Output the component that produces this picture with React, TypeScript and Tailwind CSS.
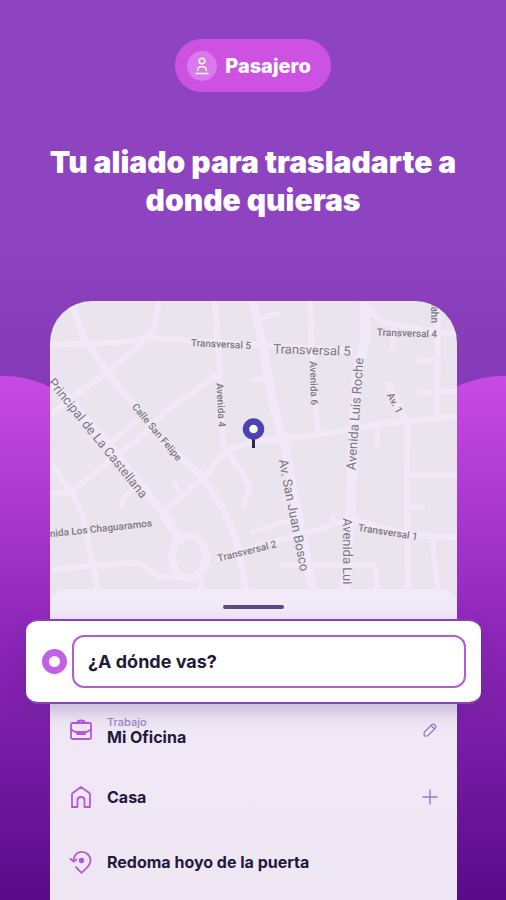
import React from "react";

const roads: { d: string; w: number }[] = [
  { d: "M22 5L35 39L57 71L78 97L112 139L153 177Q174 205 185 236L197 290", w: 7 },
  { d: "M109 0L105 24Q100 35 90 44L57 71L23 96L0 114", w: 6 },
  { d: "M0 44L70 41L105 37L203 44L303 50", w: 6 },
  { d: "M165 0L170 72L173 146", w: 6 },
  { d: "M170 72L117 109L87 139L23 189", w: 6 },
  { d: "M87 119L60 142", w: 5 },
  { d: "M0 162L22 192L33 216L48 290", w: 6 },
  { d: "M0 192L22 192", w: 5 },
  { d: "M0 269L47 264L87 262L110 276L150 277L152 290", w: 6 },
  { d: "M0 78L60 146L113 212L128 236", w: 9 },
  { d: "M113 211L153 177L177 149L203 141L280 132L333 122L407 116", w: 6 },
  { d: "M177 149L200 186L193 206", w: 6 },
  { d: "M203 0L213 46L223 102L235 146L263 290", w: 9 },
  { d: "M260 0L262 49L268 132", w: 6 },
  { d: "M315 0L315 39L307 72L303 146L300 219L295 290", w: 10 },
  { d: "M315 6L333 21L387 31L407 32", w: 6 },
  { d: "M343 26L343 49", w: 5 },
  { d: "M388 0L387 116", w: 6 },
  { d: "M337 81L357 122L358 290", w: 6 },
  { d: "M368 92L407 90M367 61L385 58M207 18L230 12M202 80L215 76", w: 5 },
  { d: "M360 174L407 174M360 206L375 206", w: 5 },
  { d: "M167 258L227 240L267 229L300 218L360 234L407 237", w: 6 },
  { d: "M200 232L240 219M283 214L284 226", w: 5 },
  { d: "M382 239L388 290M327 290L325 264L230 264", w: 5 },
  { d: "M327 126L327 146M70 206L75 195L88 184M124 180L128 192", w: 5 },
];

const labels: { t: string; x: number; y: number; r: number; s: number; a?: "start" | "end" }[] = [
  { t: "Transversal 5", x: 171, y: 43, r: 3, s: 10 },
  { t: "Transversal 5", x: 262, y: 49, r: 2, s: 13 },
  { t: "Transversal 4", x: 357, y: 32, r: 2, s: 10 },
  { t: "Jahn", x: 384, y: 22, r: 90, s: 10, a: "end" },
  { t: "Avenida 4", x: 171, y: 104, r: 87, s: 10 },
  { t: "Avenida 6", x: 264, y: 82, r: 88, s: 10 },
  { t: "Avenida Luis Roche", x: 305, y: 113, r: -86, s: 13 },
  { t: "Av. 1", x: 345, y: 102, r: 62, s: 10 },
  { t: "Av. San Juan Bosco", x: 244, y: 214, r: 79, s: 13 },
  { t: "Avenida Lui", x: 297, y: 217, r: 90, s: 13, a: "start" },
  { t: "Transversal 1", x: 338, y: 231, r: 9, s: 10 },
  { t: "Transversal 2", x: 197, y: 250, r: -14, s: 10 },
  { t: "nida Los Chaguaramos", x: 102, y: 222, r: -6, s: 10, a: "end" },
  { t: "Principal de La Castellana", x: 48, y: 137, r: 51, s: 13 },
  { t: "Calle San Felipe", x: 107, y: 131, r: 50, s: 10 },
];

function StreetMap() {
  return (
    <svg
      viewBox="0 0 407 306"
      preserveAspectRatio="xMidYMin slice"
      className="block h-[306px] w-full rounded-t-[42px] bg-[#e9e4ee]"
      role="img"
      aria-label="Mapa"
    >
      <g fill="none" stroke="#f1e9f7" strokeLinejoin="round">
        {roads.map((road) => (
          <path key={road.d} d={road.d} strokeWidth={road.w} />
        ))}
        <ellipse cx="139" cy="256" rx="17" ry="21" strokeWidth="8" />
      </g>
      <g fill="#7d7882" fontFamily="Roboto, sans-serif">
        {labels.map((l) => (
          <text
            key={l.t + l.x}
            transform={`translate(${l.x} ${l.y}) rotate(${l.r})`}
            fontSize={l.s}
            fontWeight={l.s === 10 ? 500 : 400}
            textAnchor={l.a ?? "middle"}
            dominantBaseline="central"
          >
            {l.t}
          </text>
        ))}
      </g>
      <path d="M203.500 137V147" stroke="#2c2850" strokeWidth="3" />
      <circle cx="203.500" cy="128" r="7.500" fill="#fff" stroke="#4c42b4" strokeWidth="6.500" />
    </svg>
  );
}

function BriefcaseIcon() {
  return (
    <svg viewBox="0 0 24 24" className="size-6 shrink-0" fill="none" stroke="#b558dc" strokeWidth="1.800" strokeLinejoin="round" strokeLinecap="round">
      <path d="M8 5Q8.500 2.500 12 2.500T16 5Z" />
      <rect x="2" y="5" width="20" height="16" rx="1.500" />
      <path d="M2 11Q4 14 8 14H16Q20 14 22 11M8 14V16H16V14" />
    </svg>
  );
}

function HomeIcon() {
  return (
    <svg viewBox="0 0 24 24" className="size-6 shrink-0" fill="none" stroke="#b558dc" strokeWidth="1.800" strokeLinejoin="round">
      <path d="M3 22V9.500Q3 8.500 4 7.800L12 2L20 7.800Q21 8.500 21 9.500V22H15.500V15Q15.500 12 12 12T8.500 15V22Z" />
    </svg>
  );
}

function RecentPlaceIcon() {
  return (
    <svg viewBox="0 0 24 24" className="size-6 shrink-0" fill="none" stroke="#b558dc" strokeWidth="1.800" strokeLinejoin="round" strokeLinecap="round">
      <path d="M4.500 10C5 5 8.500 1.800 12.500 1.800C17.500 1.800 21.500 5.500 21.500 10.500C21.500 16 16.500 19 12.500 22.800C10.500 21 8.500 19 7 17" />
      <path d="M1.500 9L4.500 11.500L7.500 9.500" />
      <circle cx="12.500" cy="10.500" r="1.800" fill="#b558dc" />
    </svg>
  );
}

function PencilIcon() {
  return (
    <svg viewBox="0 0 16 16" className="size-4" fill="none" stroke="#8f7fbd" strokeWidth="1.300" strokeLinejoin="round">
      <path d="M2.500 10L10 2.500Q11.500 1.500 13 3Q14.500 4.500 13.500 6L6 13.500Q4 14.500 2.500 14Q1.500 12 2.500 10ZM9 3.500L12.500 7" />
    </svg>
  );
}

function PlusIcon() {
  return (
    <svg viewBox="0 0 16 16" className="size-4" fill="none" stroke="#8f7fbd" strokeWidth="1.400">
      <path d="M8 0.500V15.500M0.500 8H15.500" />
    </svg>
  );
}

export default function App() {
  return (
    <main className="relative isolate flex min-h-screen flex-col overflow-hidden bg-linear-to-b from-[#8e43c0] from-25% to-[#7b32b0] to-60% font-['Inter',sans-serif]">
      <div className="absolute inset-x-0 top-[376px] bottom-0 -z-10 flex justify-between">
        <div className="-ml-24 w-[200px] rounded-t-[100px] bg-linear-to-b from-[#c84ae4] via-[#8c26b8] via-50% to-[#590b89]" />
        <div className="-mr-24 w-[200px] rounded-t-[100px] bg-linear-to-b from-[#c84ae4] via-[#8c26b8] via-50% to-[#590b89]" />
      </div>

      <header className="flex flex-col items-center px-10 pt-[39px] text-white">
        <div className="flex h-[53px] items-center gap-2 rounded-full bg-[#cd52e2] pr-5 pl-3">
          <span className="flex size-[30px] items-center justify-center rounded-full bg-[#da79ea]">
            <svg viewBox="0 0 16 20" className="h-5 w-4" fill="none" stroke="#fff" strokeWidth="1.500" strokeLinecap="round">
              <circle cx="8" cy="5" r="2.800" />
              <path d="M3.500 14.500Q4 10.500 8 10.500T12.500 14.500M2 17.500H14" />
            </svg>
          </span>
          <span className="text-xl font-extrabold">Pasajero</span>
        </div>
        <h1 className="mt-[51px] text-center text-[30px] leading-[38px] font-black">
          Tu aliado para trasladarte a donde quieras
        </h1>
      </header>

      <section className="mr-[49px] ml-[50px] mt-[82px] flex flex-1 flex-col">
        <StreetMap />
        <div className="relative -mt-[18px] flex flex-1 flex-col rounded-t-2xl bg-linear-to-b from-[#f1eaf8] to-[#eee6f3]">
          <div className="mx-auto mt-4 h-1 w-[61px] rounded-full bg-[#5c4a87]" />

          <div className="relative -mx-6 mt-[10px] flex h-[85px] items-center gap-[5px] rounded-xl border-y-2 border-[#8b40b8] bg-white pr-[15px] pl-4 shadow-[0_8px_18px_rgba(70,50,120,0.250)]">
            <span className="size-[25px] shrink-0 rounded-full border-[7px] border-[#c25fe3]" />
            <input
              type="text"
              aria-label="¿A dónde vas?"
              placeholder="¿A dónde vas?"
              className="h-[53px] min-w-0 flex-1 rounded-xl border-2 border-[#b65bd3] px-[14px] text-lg font-bold outline-none placeholder:text-[#211a35]"
            />
          </div>

          <ul className="-mt-2 px-[19px] text-base leading-4 font-bold text-[#211a3d]">
            <li className="flex h-[68px] items-center gap-[14px]">
              <BriefcaseIcon />
              <div className="flex-1">
                <p className="text-[11px] leading-[14px] font-medium text-[#9a86c6]">Trabajo</p>
                <p>Mi Oficina</p>
              </div>
              <button type="button" aria-label="Editar Mi Oficina">
                <PencilIcon />
              </button>
            </li>
            <li className="flex h-[66px] items-center gap-[14px]">
              <HomeIcon />
              <p className="flex-1">Casa</p>
              <button type="button" aria-label="Agregar Casa">
                <PlusIcon />
              </button>
            </li>
            <li className="flex h-16 items-center gap-[14px]">
              <RecentPlaceIcon />
              <p className="flex-1">Redoma hoyo de la puerta</p>
            </li>
          </ul>
        </div>
      </section>
    </main>
  );
}
